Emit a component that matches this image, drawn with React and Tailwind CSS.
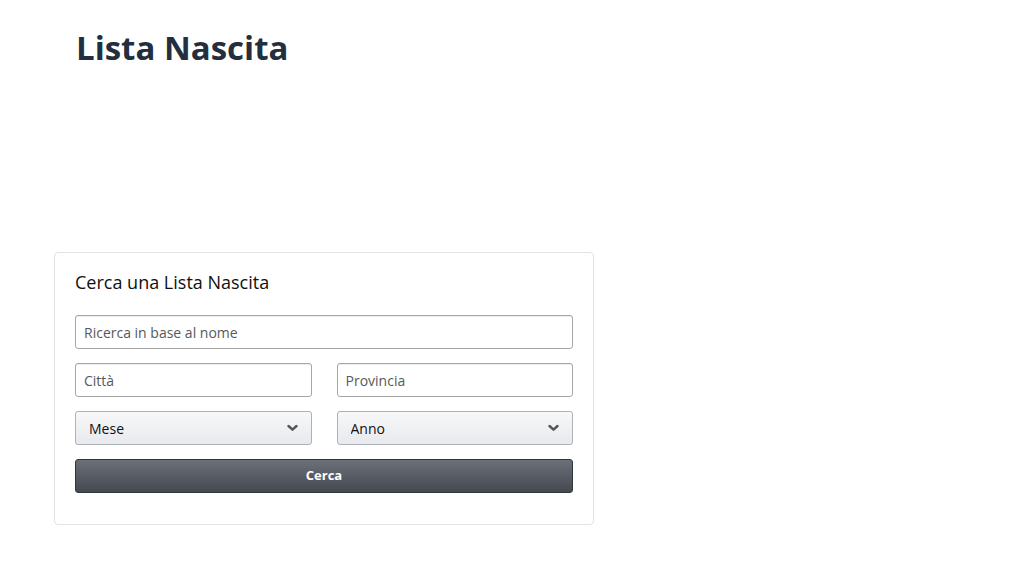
import React from 'react';

const Chevron = () => (
  <svg width="11" height="7" viewBox="0 0 11 7" className="pointer-events-none absolute right-[14px] top-1/2 -translate-y-1/2">
    <path d="M1.5 1.5 L5.5 5.2 L9.5 1.5" fill="none" stroke="#555" strokeWidth="2.4" strokeLinecap="round" strokeLinejoin="round" />
  </svg>
);

const TextField = ({ placeholder, className = '' }) => (
  <input
    type="text"
    placeholder={placeholder}
    className={`h-[34px] rounded-[3px] border border-[#a6a6a6] bg-white px-[8px] text-[14px] text-[#111] placeholder:text-[#575959] shadow-[inset_0_1px_0_rgba(0,0,0,0.07)] outline-none ${className}`}
  />
);

const SelectField = ({ label }) => (
  <div className="relative flex-1">
    <select
      defaultValue=""
      className="h-[34px] w-full appearance-none rounded-[3px] border border-[#adb1b8] bg-gradient-to-b from-[#f7f8fa] to-[#e7e9ec] px-[13px] text-[14px] text-[#0f1111] outline-none"
    >
      <option value="">{label}</option>
    </select>
    <Chevron />
  </div>
);

const App = () => {
  return (
    <div className="min-h-[578px] bg-white font-['Open_Sans','Noto_Sans',sans-serif] text-[#0f1111]">
      <div className="pl-[76px] pt-[26px]">
        <h1 className="text-[33px] font-bold leading-[44px] text-[#232f3e]">Lista Nascita</h1>
      </div>
      <div className="ml-[54px] mt-[182px] w-[540px] rounded-[4px] border border-[#e3e3e3] px-[20px] pb-[31px] pt-[16px]">
        <h2 className="text-[18px] leading-[26px] text-[#0f1111]">Cerca una Lista Nascita</h2>
        <form className="mt-[20px] flex flex-col gap-[14px]" onSubmit={(e) => e.preventDefault()}>
          <TextField placeholder="Ricerca in base al nome" className="w-full" />
          <div className="flex gap-[25px]">
            <TextField placeholder="Città" className="flex-1" />
            <TextField placeholder="Provincia" className="flex-1" />
          </div>
          <div className="flex gap-[25px]">
            <SelectField label="Mese" />
            <SelectField label="Anno" />
          </div>
          <button
            type="submit"
            className="h-[34px] w-full rounded-[3px] border border-[#32373e] bg-gradient-to-b from-[#6c7179] to-[#454a51] text-[13px] font-bold text-white"
          >
            Cerca
          </button>
        </form>
      </div>
    </div>
  );
};

export default App;
